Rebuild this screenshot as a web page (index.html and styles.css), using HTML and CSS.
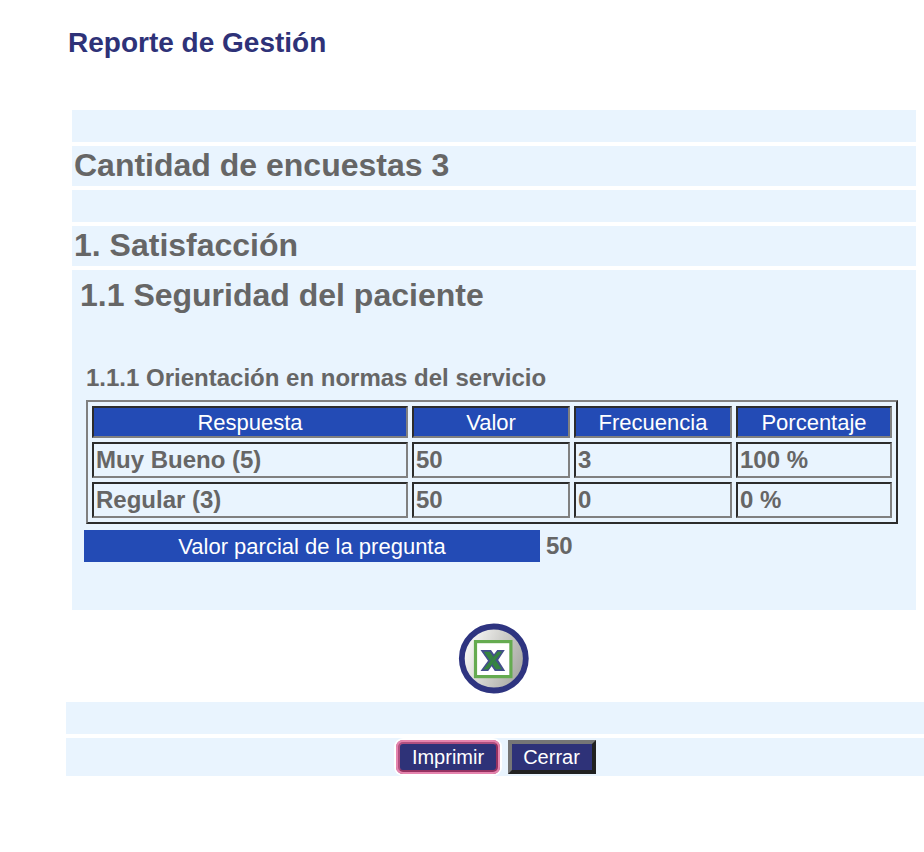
FILE: index.html
```html
<!DOCTYPE html>
<html lang="es">
<head>
<meta charset="utf-8">
<title>Reporte de Gestión</title>
<link rel="stylesheet" href="styles.css">
</head>
<body>
<h1 class="title">Reporte de Gestión</h1>
<main class="report">
  <div class="band"></div>
  <h2 class="heading">Cantidad de encuestas 3</h2>
  <div class="band"></div>
  <h2 class="heading">1. Satisfacción</h2>
  <section class="section">
    <h2 class="subheading">1.1 Seguridad del paciente</h2>
    <h3 class="question">1.1.1 Orientación en normas del servicio</h3>
    <div class="answers">
      <div class="cell head">Respuesta</div><div class="cell head">Valor</div><div class="cell head">Frecuencia</div><div class="cell head">Porcentaje</div>
      <div class="cell">Muy Bueno (5)</div><div class="cell">50</div><div class="cell">3</div><div class="cell">100 %</div>
      <div class="cell">Regular (3)</div><div class="cell">50</div><div class="cell">0</div><div class="cell">0 %</div>
    </div>
    <div class="partial"><span class="partial-label">Valor parcial de la pregunta</span><span class="partial-value">50</span></div>
  </section>
</main>
<div class="export">
  <svg width="72" height="72" viewBox="0 0 72 72" role="img" aria-label="Excel">
    <defs>
      <linearGradient id="disc" x1="0" y1="0.3" x2="1" y2="0.7">
        <stop offset="0.1" stop-color="#f4f4f2"/><stop offset="0.5" stop-color="#cfcfcb"/><stop offset="1" stop-color="#a3a39e"/>
      </linearGradient>
    </defs>
    <circle cx="35.8" cy="36.5" r="32" fill="url(#disc)" stroke="#2e3480" stroke-width="5.8"/>
    <rect x="17.5" y="19.6" width="35.4" height="35" fill="#fff" stroke="#65ab50" stroke-width="3.2"/>
    <path d="M22.5 28H33L36 32.2L39.2 28H46.8L40.2 38L47.2 49H36.8L33.6 44.3L30.2 49H22.5L30 38.8Z" fill="#434f8b"/>
    <path d="M25.8 29.8H31.8L43.8 47.2H37.8Z" fill="#358440"/>
    <path d="M39.8 29.8H44L30 47.2H25.6Z" fill="#358440" stroke="#434f8b" stroke-width="0.7"/>
    <path d="M39.8 29.8H44L30 47.2H25.6Z" fill="#358440"/>
  </svg>
</div>
<footer class="footer">
  <div class="band"></div>
  <div class="actions">
    <button class="button focused">Imprimir</button>
    <button class="button">Cerrar</button>
  </div>
</footer>
</body>
</html>
```

FILE: styles.css
```css
* { box-sizing: border-box; }
body {
  margin: 0;
  height: 852px;
  overflow: hidden;
  background: #fff;
  font-family: "Liberation Sans", Arial, sans-serif;
  font-weight: bold;
  color: #666;
}
h1, h2, h3 { margin: 0; white-space: nowrap; }
.title {
  height: 110px;
  padding: 27px 0 0 68px;
  font-size: 28px;
  line-height: 32px;
  color: #2e3278;
}
.report {
  display: flex;
  flex-direction: column;
  gap: 4px;
  margin: 0 8px 0 72px;
}
.band { height: 32px; background: #e9f4fe; }
.heading {
  height: 40px;
  padding-left: 2px;
  font-size: 32px;
  line-height: 38px;
  background: #e9f4fe;
}
.section { height: 340px; padding: 6px 18px 0 12px; background: #e9f4fe; }
.subheading { margin-left: -4px; font-size: 32px; line-height: 38px; }
.question { margin: 50px 0 0 2px; font-size: 24px; line-height: 28px; }
.answers {
  display: grid;
  grid-template-columns: 316px 158px 158px 156px;
  grid-template-rows: 32px 36px 36px;
  gap: 4px;
  width: 812px;
  height: 124px;
  margin: 8px 0 0 2px;
  padding: 4px;
  border: 2px solid;
  border-color: #808080 #2c2c2c #2c2c2c #808080;
}
.cell {
  padding-left: 2px;
  border: 2px solid;
  border-color: #2c2c2c #808080 #808080 #2c2c2c;
  font-size: 24px;
  line-height: 32px;
}
.head {
  padding: 0;
  background: #234bb5;
  color: #fff;
  font-size: 22px;
  font-weight: normal;
  line-height: 29px;
  text-align: center;
}
.partial { display: flex; margin-top: 6px; line-height: 32px; }
.partial-label {
  width: 456px;
  height: 32px;
  background: #234bb5;
  color: #fff;
  font-size: 22px;
  font-weight: normal;
  line-height: 33px;
  text-align: center;
}
.partial-value { margin-left: 6px; font-size: 24px; }
.export {
  display: flex;
  justify-content: center;
  height: 92px;
  padding: 12px 0 0 64px;
}
.footer { display: flex; flex-direction: column; gap: 4px; margin-left: 66px; }
.actions {
  display: flex;
  gap: 8px;
  height: 38px;
  padding: 2px 0 0 330px;
  background: #e9f4fe;
}
.button {
  width: 88px;
  height: 34px;
  padding: 0 1px 0 0;
  border: 4px solid;
  border-color: #767676 #212121 #212121 #767676;
  background: #2e3278;
  color: #fff;
  font: 20px/26px "Liberation Sans", Arial, sans-serif;
}
.focused {
  width: 104px;
  padding: 0;
  border-color: #b05080 #953260 #953260 #b05080;
  border-radius: 7px;
  box-shadow: 0 0 0 2px #fff;
  outline: 2px solid #e684ae;
  outline-offset: -2px;
}
```
